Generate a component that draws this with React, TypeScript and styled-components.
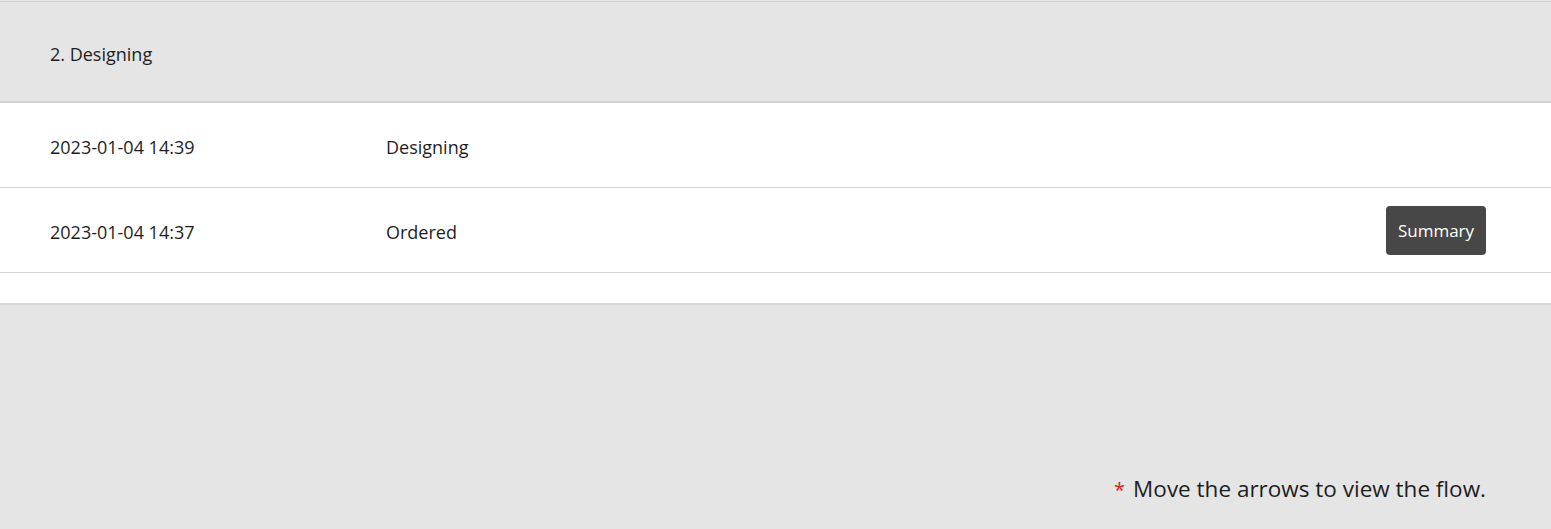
import React from "react";
import styled, { createGlobalStyle } from "styled-components";

const Global = createGlobalStyle`
  html, body { margin: 0; padding: 0; background: #e5e5e5; }
  body { font-family: "Open Sans", "Noto Sans", sans-serif; color: #1e1e1e; }
`;

const Page = styled.div`
  display: flex;
  flex-direction: column;
  height: 529px;
  background: #e5e5e5;
  padding-top: 1px;
  box-sizing: border-box;
`;

const Panel = styled.section`
  border-top: 1px solid #d2d2d2;
  border-bottom: 2px solid #d6d6d6;
  background: #fff;
`;

const Header = styled.div`
  display: flex;
  align-items: center;
  height: 101px;
  padding: 4px 50px 0;
  box-sizing: border-box;
  background: #e5e5e5;
  border-bottom: 2px solid #d2d2d2;
  font-size: 18px;
`;

const Row = styled.div`
  display: grid;
  grid-template-columns: 336px 1fr auto;
  align-items: center;
  height: 84px;
  padding: 0 65px 0 50px;
  border-bottom: 1px solid #d4d4d4;
  font-size: 18px;
`;

const Cell = styled.span`
  white-space: nowrap;
  padding-top: 3px;
`;

const Button = styled.button`
  width: 100px;
  height: 49px;
  margin-top: 1px;
  border: none;
  border-radius: 4px;
  background: #474747;
  color: #fff;
  font-family: inherit;
  font-size: 17px;
  cursor: pointer;
`;

const Spacer = styled.div`
  height: 30px;
`;

const Footer = styled.div`
  flex: 1;
  display: flex;
  justify-content: flex-end;
  align-items: flex-end;
  padding: 0 65px 25px 0;
`;

const Note = styled.p`
  margin: 0;
  font-size: 22.5px;
  color: #1e1e1e;
`;

const Star = styled.span`
  color: #e0201e;
  font-size: 20px;
  margin-right: 8px;
`;

const rows = [
  { time: "2023-01-04 14:39", status: "Designing", action: false },
  { time: "2023-01-04 14:37", status: "Ordered", action: true },
];

export default function App() {
  return (
    <>
      <Global />
      <Page>
        <Panel>
          <Header>2. Designing</Header>
          {rows.map((r) => (
            <Row key={r.time}>
              <Cell>{r.time}</Cell>
              <Cell>{r.status}</Cell>
              {r.action ? <Button>Summary</Button> : <span />}
            </Row>
          ))}
          <Spacer />
        </Panel>
        <Footer>
          <Note>
            <Star>*</Star>Move the arrows to view the flow.
          </Note>
        </Footer>
      </Page>
    </>
  );
}
